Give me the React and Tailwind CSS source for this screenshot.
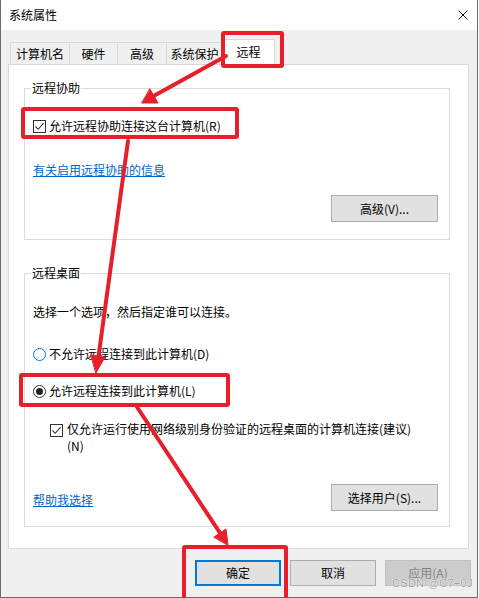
import React from "react";

const TABS = [
  { label: "计算机名", w: "w-[59px]" },
  { label: "硬件", w: "w-[48px]" },
  { label: "高级", w: "w-[49px]" },
  { label: "系统保护", w: "w-[56px]" },
];

function CheckBox() {
  return (
    <span className="w-[13px] h-[13px] border border-[#333333] bg-white flex items-center justify-center shrink-0">
      <svg width="11" height="11" viewBox="0 0 11 11">
        <path d="M1.5 5.5 L4.2 8.3 L9.6 2.2" fill="none" stroke="#333333" strokeWidth="1.1" />
      </svg>
    </span>
  );
}

function Radio({ checked, focus }) {
  return (
    <span
      className={`w-[13px] h-[13px] rounded-full border bg-white flex items-center justify-center shrink-0 ${
        focus ? "border-[#0078d7]" : "border-[#333333]"
      }`}
    >
      {checked && <span className="w-[7px] h-[7px] rounded-full bg-[#222222]" />}
    </span>
  );
}

function Btn({ children, className = "" }) {
  return (
    <div
      className={`flex items-center justify-center border border-[#adadad] bg-[#e1e1e1] leading-[16px] ${className}`}
    >
      {children}
    </div>
  );
}

export default function App() {
  return (
    <div className="w-[479px] h-[598px] bg-white relative overflow-hidden font-['Noto_Sans_CJK_SC',sans-serif] text-[12px] text-black">
      <div className="w-[478px] h-[598px] bg-[#f0f0f0] border-l border-r border-b border-[#6b6b6b] flex flex-col">
        {/* title bar */}
        <div className="h-[30px] bg-white flex items-center justify-between pl-[8px] pr-[9px] shrink-0">
          <span className="leading-[16px]">系统属性</span>
          <svg width="10" height="10" viewBox="0 0 10 10">
            <path d="M0.5 0.5 L9.5 9.5 M9.5 0.5 L0.5 9.5" stroke="#111111" strokeWidth="1" />
          </svg>
        </div>

        <div className="pl-[7px] pr-[8px] pt-[9px] flex flex-col">
          {/* tabs */}
          <div className="flex items-end pl-[2px]">
            {TABS.map((t) => (
              <div
                key={t.label}
                className={`${t.w} h-[22px] border-t border-l border-[#d9d9d9] bg-[#f0f0f0] flex items-center justify-center leading-[16px]`}
              >
                {t.label}
              </div>
            ))}
            <div className="w-[53px] h-[26px] -mb-px relative z-10 border border-b-0 border-[#d9d9d9] bg-white flex items-center justify-center pb-[2px] leading-[16px]">
              远程
            </div>
          </div>

          {/* panel */}
          <div className="h-[485px] border border-[#d9d9d9] bg-white pl-[15px] pt-[15px] flex flex-col">
            <fieldset className="w-[426px] border border-[#dcdcdc]">
              <legend className="ml-[6px] px-[1px] leading-[16px]">远程协助</legend>
              <div className="pl-[8px] pr-[11px] pt-[22px] pb-[17px] flex flex-col">
                <div className="flex items-center gap-[3px] h-[16px]">
                  <CheckBox />
                  <span className="leading-[16px]">允许远程协助连接这台计算机(R)</span>
                </div>
                <span className="mt-[28px] leading-[16px] text-[#0066cc] underline self-start">
                  有关启用远程协助的信息
                </span>
                <Btn className="mt-[17px] self-end w-[107px] h-[27px]">高级(V)...</Btn>
              </div>
            </fieldset>

            <fieldset className="w-[426px] mt-[25px] border border-[#dcdcdc]">
              <legend className="ml-[6px] px-[1px] leading-[16px]">远程桌面</legend>
              <div className="pl-[8px] pr-[11px] pt-[23px] pb-[15px] flex flex-col">
                <span className="leading-[16px]">选择一个选项，然后指定谁可以连接。</span>
                <div className="mt-[26px] flex items-center gap-[3px] h-[16px]">
                  <Radio focus />
                  <span className="leading-[16px]">不允许远程连接到此计算机(D)</span>
                </div>
                <div className="mt-[21px] flex items-center gap-[3px] h-[16px]">
                  <Radio checked />
                  <span className="leading-[16px]">允许远程连接到此计算机(L)</span>
                </div>
                <div className="mt-[21px] ml-[17px] flex items-start gap-[4px]">
                  <span className="mt-[4px]">
                    <CheckBox />
                  </span>
                  <span className="leading-[17px]">
                    仅允许运行使用网络级别身份验证的远程桌面的计算机连接(建议)
                    <br />
                    (N)
                  </span>
                </div>
                <div className="mt-[30px] flex items-start justify-between">
                  <span className="mt-[8px] leading-[16px] text-[#0066cc] underline">帮助我选择</span>
                  <Btn className="w-[107px] h-[27px]">选择用户(S)...</Btn>
                </div>
              </div>
            </fieldset>
          </div>

          {/* dialog buttons */}
          <div className="mt-[11px] -mr-[2px] flex justify-end gap-[9px]">
            <div className="w-[86px] h-[26px] border-2 border-[#0078d7] bg-[#e1e1e1] flex items-center justify-center leading-[16px]">
              确定
            </div>
            <Btn className="w-[86px] h-[26px]">取消</Btn>
            <div className="w-[86px] h-[26px] border border-[#bfbfbf] bg-[#cccccc] text-[#838383] flex items-center justify-center leading-[16px]">
              应用(A)
            </div>
          </div>
        </div>
      </div>

      {/* watermark */}
      <span className="absolute left-[392px] top-[577px] text-[11px] leading-[13px] tracking-[0.3px] text-[#9c9c9c] [text-shadow:0_0_1px_#ffffff,0_0_1px_#ffffff,0_0_1px_#ffffff] font-['Liberation_Sans',sans-serif]">
        CSDN @C7+0J
      </span>

      {/* red annotation boxes */}
      <div className="absolute left-[221px] top-[31px] w-[63px] h-[37px] border-[4px] border-[#e61f2a] rounded-[3px] z-20" />
      <div className="absolute left-[21px] top-[107px] w-[218px] h-[32px] border-[4px] border-[#e61f2a] rounded-[3px] z-20" />
      <div className="absolute left-[19px] top-[373px] w-[211px] h-[34px] border-[4px] border-[#e61f2a] rounded-[3px] z-20" />
      <div className="absolute left-[182px] top-[545px] w-[106px] h-[60px] border-[4px] border-[#e61f2a] rounded-[3px] z-20" />

      {/* red arrows */}
      <svg className="absolute left-0 top-0 z-20 pointer-events-none" width="479" height="598" viewBox="0 0 479 598">
        <g stroke="#e61f2a" strokeWidth="4" fill="#e61f2a" strokeLinecap="round">
          <line x1="226" y1="56" x2="150" y2="98" />
          <polygon points="142,103 158,103 150,89" strokeWidth="1" />
          <line x1="128" y1="141" x2="98" y2="360" />
          <polygon points="96,373 105,357 91,355" strokeWidth="1" />
          <line x1="137" y1="407" x2="222" y2="536" />
          <polygon points="228,545 226,529 214,537" strokeWidth="1" />
        </g>
      </svg>
    </div>
  );
}
